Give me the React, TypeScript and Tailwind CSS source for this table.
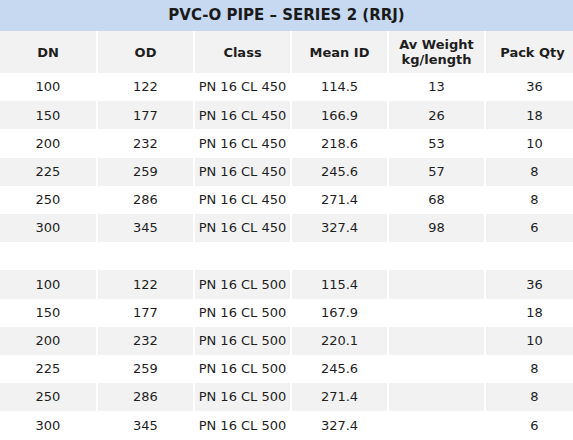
const WIDTHS = ['w-[98px]', 'w-[97px]', 'w-[97px]', 'w-[97px]', 'w-[97px]', 'w-[87px]'];

type Row = [string, string, string, string, string, string];

const CL450: Row[] = [
  ['100', '122', 'PN 16 CL 450', '114.5', '13', '36'],
  ['150', '177', 'PN 16 CL 450', '166.9', '26', '18'],
  ['200', '232', 'PN 16 CL 450', '218.6', '53', '10'],
  ['225', '259', 'PN 16 CL 450', '245.6', '57', '8'],
  ['250', '286', 'PN 16 CL 450', '271.4', '68', '8'],
  ['300', '345', 'PN 16 CL 450', '327.4', '98', '6'],
];

const CL500: Row[] = [
  ['100', '122', 'PN 16 CL 500', '115.4', '', '36'],
  ['150', '177', 'PN 16 CL 500', '167.9', '', '18'],
  ['200', '232', 'PN 16 CL 500', '220.1', '', '10'],
  ['225', '259', 'PN 16 CL 500', '245.6', '', '8'],
  ['250', '286', 'PN 16 CL 500', '271.4', '', '8'],
  ['300', '345', 'PN 16 CL 500', '327.4', '', '6'],
];

function DataRow({ row, shaded }: { row: Row; shaded: boolean }) {
  return (
    <div className={`flex h-[28.2px] ${shaded ? 'bg-[#f2f2f2]' : 'bg-white'}`}>
      {row.map((cell, i) => (
        <div
          key={i}
          className={`${WIDTHS[i]} flex items-center justify-center ${i < 5 ? 'border-r-2 border-white' : ''} ${i === 5 ? 'pl-[10px]' : ''}`}
        >
          {cell}
        </div>
      ))}
    </div>
  );
}

export default function App() {
  const headers = ['DN', 'OD', 'Class', 'Mean ID', 'Av Weight\nkg/length', 'Pack Qty'];
  return (
    <div
      className="w-[573px] h-[440px] overflow-hidden bg-white text-[13px] text-[#1e1e1e]"
      style={{ fontFamily: '"DejaVu Sans", Verdana, sans-serif' }}
    >
      {/* Title */}
      <div className="h-[31px] bg-[#c6d9f1] flex items-center justify-center font-bold text-[15px] text-[#1a1a1a]">
        PVC-O PIPE – SERIES 2 (RRJ)
      </div>

      {/* Header */}
      <div className="flex h-[42px] bg-[#f2f2f2] font-bold">
        {headers.map((h, i) => (
          <div
            key={h}
            className={`${WIDTHS[i]} flex items-center justify-center text-center leading-[15px] whitespace-pre-line ${i < 5 ? 'border-r-2 border-white' : ''} ${i === 5 ? 'pl-[6px]' : ''}`}
          >
            {h}
          </div>
        ))}
      </div>

      {CL450.map((r, i) => (
        <DataRow key={'a' + i} row={r} shaded={i % 2 === 1} />
      ))}
      <div className="h-[28.2px] bg-white" />
      {CL500.map((r, i) => (
        <DataRow key={'b' + i} row={r} shaded={i % 2 === 0} />
      ))}
    </div>
  );
}
